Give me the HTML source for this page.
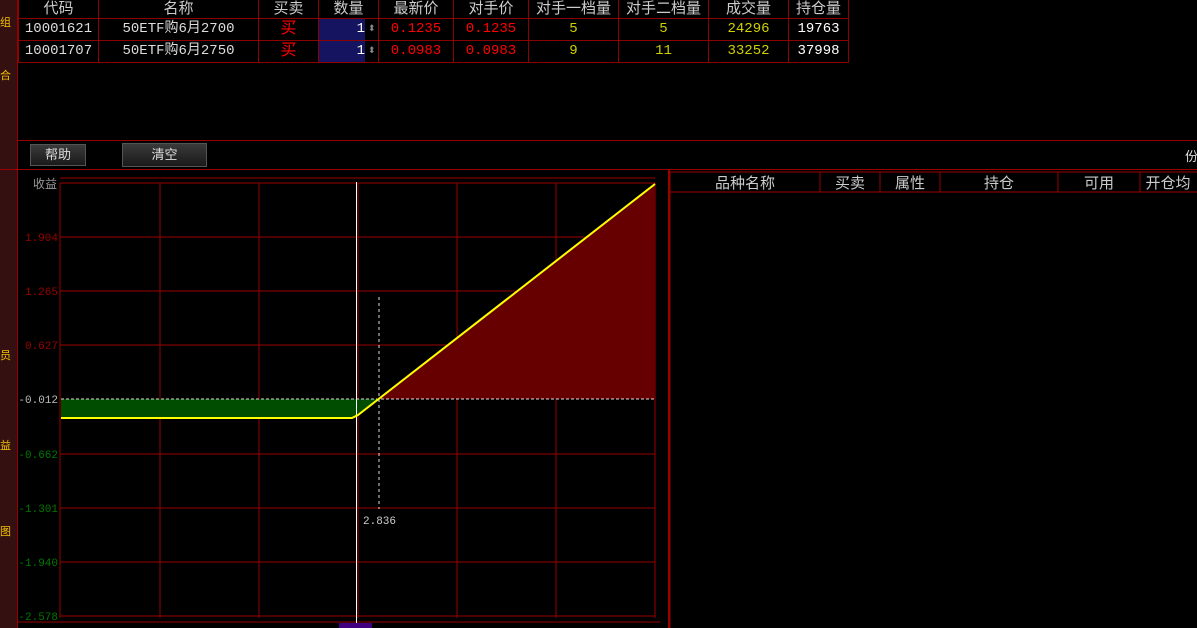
<!DOCTYPE html><html><head><style>
body{margin:0;width:1197px;height:628px;background:#000;overflow:hidden;position:relative;font-family:"Liberation Sans","Noto Sans CJK SC",sans-serif;}
.a{position:absolute}
#side{left:0;top:0;width:17px;height:628px;background:#351010;border-right:1px solid #900;}
.sc{position:absolute;left:0;font-size:11px;color:#f0c000}
table{position:absolute;left:18px;top:0;border-collapse:collapse;font-size:14px;table-layout:fixed}
td{border:1px solid #8b0000;height:21px;line-height:21px;padding:0;text-align:center;color:#ddd;font-family:"Liberation Mono","Noto Sans CJK SC",monospace;overflow:hidden;white-space:nowrap}
tr.h td{height:18px;line-height:16px;color:#ccc;font-family:"Liberation Sans","Noto Sans CJK SC",sans-serif;border-top:none;font-size:15px}
.r{color:#f00}.y{color:#d0d000}.w{color:#fff}
.btn{position:absolute;background:linear-gradient(#3a3a3a,#1a1a1a);border:1px solid #555;color:#ddd;font-size:13px;text-align:center;line-height:20px;height:20px}
</style></head><body>
<div id="side" class="a"></div>
<div class="sc" style="top:14px">组</div><div class="sc" style="top:67px">合</div><div class="sc" style="top:347px">员</div><div class="sc" style="top:437px">益</div><div class="sc" style="top:523px">图</div>
<table>
<colgroup><col style="width:80px"><col style="width:160px"><col style="width:60px"><col style="width:60px"><col style="width:75px"><col style="width:75px"><col style="width:90px"><col style="width:90px"><col style="width:80px"><col style="width:60px"></colgroup>
<tr class="h"><td>代码</td><td>名称</td><td>买卖</td><td>数量</td><td>最新价</td><td>对手价</td><td>对手一档量</td><td>对手二档量</td><td>成交量</td><td>持仓量</td></tr>
<tr><td>10001621</td><td>50ETF购6月2700</td><td class="r" style="font-size:16px">买</td><td style="text-align:left;position:relative"><div style="background:#141460;width:46px;height:21px;text-align:right;color:#fff;line-height:21px">1</div><span style="position:absolute;left:49px;top:0;color:#888;font-size:9px">⬍</span></td><td class="r">0.1235</td><td class="r">0.1235</td><td class="y">5</td><td class="y">5</td><td class="y">24296</td><td class="w">19763</td></tr>
<tr><td>10001707</td><td>50ETF购6月2750</td><td class="r" style="font-size:16px">买</td><td style="text-align:left;position:relative"><div style="background:#141460;width:46px;height:21px;text-align:right;color:#fff;line-height:21px">1</div><span style="position:absolute;left:49px;top:0;color:#888;font-size:9px">⬍</span></td><td class="r">0.0983</td><td class="r">0.0983</td><td class="y">9</td><td class="y">11</td><td class="y">33252</td><td class="w">37998</td></tr>
</table>
<div class="a" style="left:18px;top:140px;width:1179px;height:1px;background:#900"></div>
<div class="btn" style="left:30px;top:144px;width:54px">帮助</div>
<div class="btn" style="left:122px;top:143px;width:83px;height:22px;line-height:22px">清空</div>
<div class="a" style="left:1185px;top:146px;font-size:13px;color:#ddd">份</div>
<div class="a" style="left:0;top:169px;width:1197px;height:1px;background:#900"></div>
<svg class="a" style="left:0;top:170px" width="670" height="458" font-family="Liberation Mono,monospace" font-size="11">
<g stroke="#900" fill="none"><line x1="60" y1="8" x2="655" y2="8"/><line x1="60" y1="13" x2="655" y2="13"/>
<line x1="60" y1="13" x2="60" y2="448"/><line x1="655" y1="13" x2="655" y2="448"/>
<line x1="160" y1="13" x2="160" y2="448"/><line x1="259" y1="13" x2="259" y2="448"/><line x1="358" y1="13" x2="358" y2="448"/><line x1="457" y1="13" x2="457" y2="448"/><line x1="556" y1="13" x2="556" y2="448"/>
<line x1="60" y1="67" x2="655" y2="67"/><line x1="60" y1="121" x2="655" y2="121"/><line x1="60" y1="175" x2="655" y2="175"/><line x1="60" y1="284" x2="655" y2="284"/><line x1="60" y1="338" x2="655" y2="338"/><line x1="60" y1="392" x2="655" y2="392"/><line x1="60" y1="446" x2="655" y2="446"/><line x1="18" y1="452" x2="660" y2="452"/>
<line x1="669" y1="0" x2="669" y2="458" stroke-width="2"/></g>
<polygon points="379,229 655,14 655,229" fill="#600"/>
<polygon points="61,229 379,229 352,248 61,248" fill="#004d00"/>
<line x1="61" y1="229" x2="655" y2="229" stroke="#ddd" stroke-dasharray="3,2"/>
<line x1="379" y1="127" x2="379" y2="339" stroke="#ddd" stroke-dasharray="3,3"/>
<line x1="356.5" y1="12" x2="356.5" y2="458" stroke="#fff"/>
<polyline points="61,248 352,248 358,245 655,14" fill="none" stroke="#ff0" stroke-width="2"/>
<rect x="339" y="453" width="33" height="6" fill="#400080"/>
<text x="33" y="18" fill="#999" font-family="Noto Sans CJK SC" font-size="12">收益</text>
<g text-anchor="end"><text x="58" y="71" fill="#900">1.904</text><text x="58" y="125" fill="#900">1.265</text><text x="58" y="179" fill="#900">0.627</text><text x="58" y="233" fill="#bbb">-0.012</text><text x="58" y="288" fill="#070">-0.662</text><text x="58" y="342" fill="#070">-1.301</text><text x="58" y="396" fill="#070">-1.940</text><text x="58" y="450" fill="#070">-2.578</text></g>
<text x="363" y="354" fill="#ccc">2.836</text>
</svg>
<svg class="a" style="left:668px;top:170px" width="529" height="458"><g stroke="#900" fill="none"><line x1="2" y1="2" x2="529" y2="2"/><line x1="2" y1="22" x2="529" y2="22"/><line x1="2" y1="2" x2="2" y2="458"/><line x1="152" y1="2" x2="152" y2="22"/><line x1="212" y1="2" x2="212" y2="22"/><line x1="272" y1="2" x2="272" y2="22"/><line x1="390" y1="2" x2="390" y2="22"/><line x1="472" y1="2" x2="472" y2="22"/></g>
<g fill="#ccc" font-size="15" font-family="Noto Sans CJK SC" text-anchor="middle"><text x="77" y="18">品种名称</text><text x="182" y="18">买卖</text><text x="242" y="18">属性</text><text x="331" y="18">持仓</text><text x="431" y="18">可用</text><text x="500" y="18">开仓均</text></g></svg>
</body></html>
